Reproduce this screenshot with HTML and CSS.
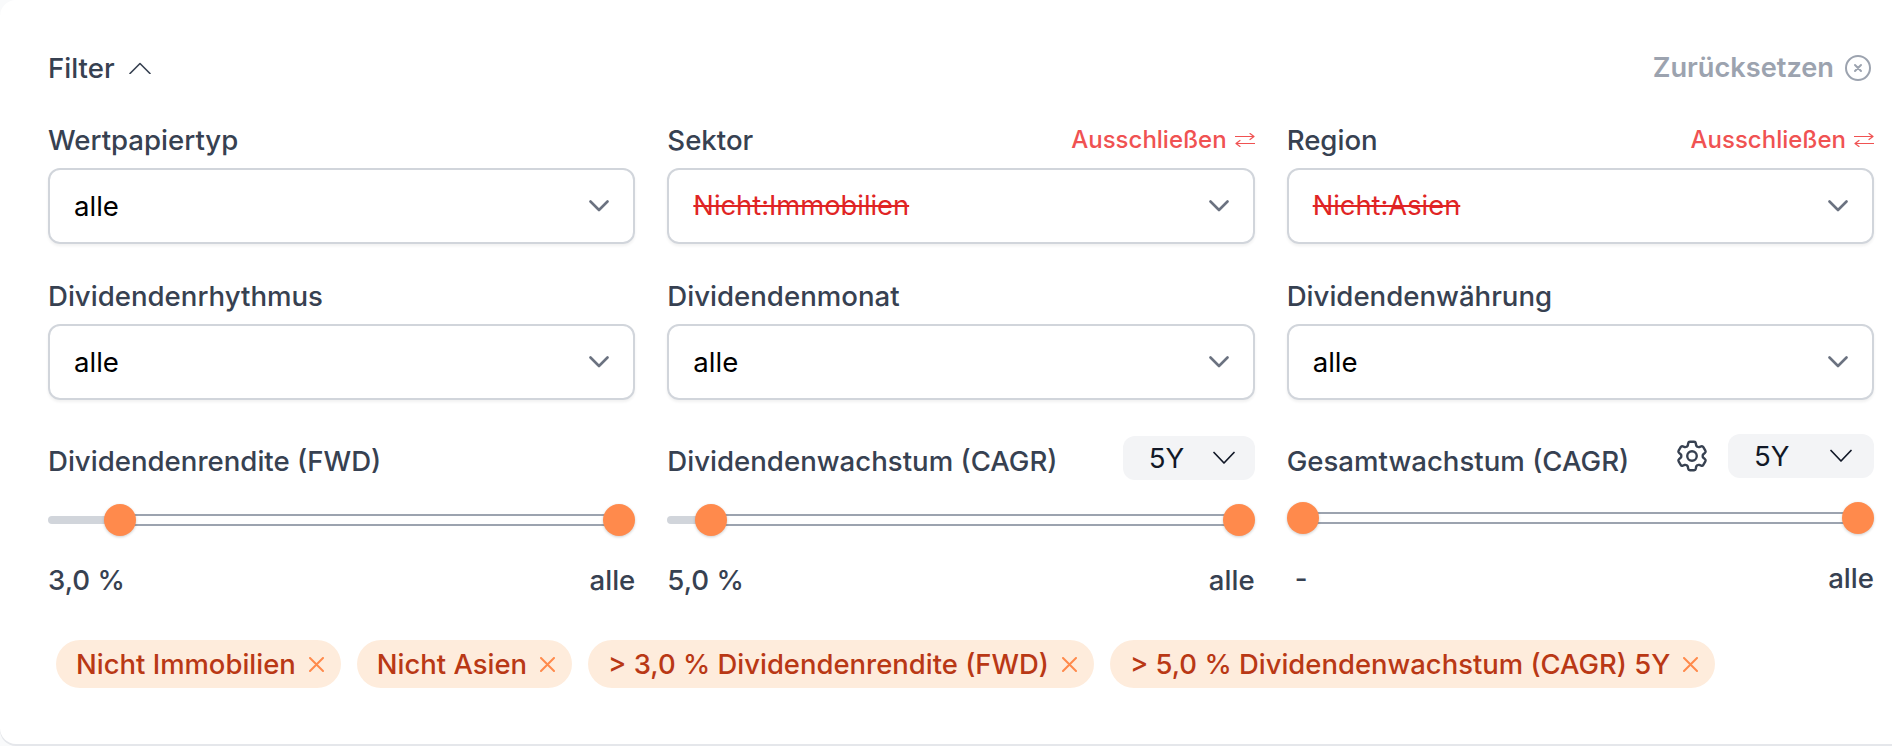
FILE: index.html
```html
<!DOCTYPE html>
<html lang="de">
<head>
    <meta charset="UTF-8">
    <title>Filter</title>
    <link rel="stylesheet" href="styles.css">
</head>
<body>
    <section class="card">
        <div class="card-head">
            <div class="toggle">
                <span>Filter</span>
                <svg class="toggle-icon" viewBox="0 0 22 12"><path d="M1 11.5L11 1.5L21 11.5"/></svg>
            </div>
            <div class="reset">
                <span>Zurücksetzen</span>
                <svg class="reset-icon" viewBox="0 0 26 26"><circle cx="13" cy="13" r="12"/><path d="M10 10l6 6M16 10l-6 6"/></svg>
            </div>
        </div>

        <div class="field-grid">
            <div class="field">
                <div class="field-label"><label>Wertpapiertyp</label></div>
                <div class="select"><span>alle</span><svg class="select-icon" viewBox="0 0 20 12"><path d="M1.5 1.5L10 10L18.5 1.5"/></svg></div>
            </div>
            <div class="field">
                <div class="field-label">
                    <label>Sektor</label>
                    <span class="exclude">Ausschließen <svg viewBox="0 0 20 14"><path d="M0 3.5h19M15 .5l4 3-4 3M20 10.5H1M5 7.5l-4 3 4 3"/></svg></span>
                </div>
                <div class="select"><span class="negated">Nicht:Immobilien</span><svg class="select-icon" viewBox="0 0 20 12"><path d="M1.5 1.5L10 10L18.5 1.5"/></svg></div>
            </div>
            <div class="field">
                <div class="field-label">
                    <label>Region</label>
                    <span class="exclude">Ausschließen <svg viewBox="0 0 20 14"><path d="M0 3.5h19M15 .5l4 3-4 3M20 10.5H1M5 7.5l-4 3 4 3"/></svg></span>
                </div>
                <div class="select"><span class="negated">Nicht:Asien</span><svg class="select-icon" viewBox="0 0 20 12"><path d="M1.5 1.5L10 10L18.5 1.5"/></svg></div>
            </div>

            <div class="field">
                <div class="field-label"><label>Dividendenrhythmus</label></div>
                <div class="select"><span>alle</span><svg class="select-icon" viewBox="0 0 20 12"><path d="M1.5 1.5L10 10L18.5 1.5"/></svg></div>
            </div>
            <div class="field">
                <div class="field-label"><label>Dividendenmonat</label></div>
                <div class="select"><span>alle</span><svg class="select-icon" viewBox="0 0 20 12"><path d="M1.5 1.5L10 10L18.5 1.5"/></svg></div>
            </div>
            <div class="field">
                <div class="field-label"><label>Dividendenwährung</label></div>
                <div class="select"><span>alle</span><svg class="select-icon" viewBox="0 0 20 12"><path d="M1.5 1.5L10 10L18.5 1.5"/></svg></div>
            </div>
        </div>

        <div class="range-grid">
            <div class="range">
                <div class="range-head"><label>Dividendenrendite (FWD)</label></div>
                <div class="slider">
                    <div class="slider-rest slider-rest-yield"></div>
                    <div class="slider-handle"></div>
                    <div class="slider-active"></div>
                    <div class="slider-handle"></div>
                </div>
                <div class="range-values"><span>3,0 %</span><span>alle</span></div>
            </div>
            <div class="range">
                <div class="range-head">
                    <label>Dividendenwachstum (CAGR)</label>
                    <div class="period"><span>5Y</span><svg class="period-icon" viewBox="0 0 22 14"><path d="M1 1.5L11 12L21 1.5"/></svg></div>
                </div>
                <div class="slider">
                    <div class="slider-rest slider-rest-growth"></div>
                    <div class="slider-handle"></div>
                    <div class="slider-active"></div>
                    <div class="slider-handle"></div>
                </div>
                <div class="range-values"><span>5,0 %</span><span>alle</span></div>
            </div>
            <div class="range range-total">
                <div class="range-head">
                    <label>Gesamtwachstum (CAGR)</label>
                    <svg class="gear" viewBox="0 0 24 24"><path d="M9.594 3.94c.09-.542.56-.94 1.11-.94h2.593c.55 0 1.02.398 1.11.94l.213 1.281c.063.374.313.686.645.87.074.04.147.083.22.127.324.196.72.257 1.075.124l1.217-.456a1.125 1.125 0 011.37.49l1.296 2.247a1.125 1.125 0 01-.26 1.431l-1.003.827c-.293.24-.438.613-.431.992a6.759 6.759 0 010 .255c-.007.378.138.75.43.99l1.005.828c.424.35.534.954.26 1.43l-1.298 2.247a1.125 1.125 0 01-1.369.491l-1.217-.456c-.355-.133-.75-.072-1.076.124a6.57 6.57 0 01-.22.128c-.331.183-.581.495-.644.869l-.213 1.28c-.09.543-.56.941-1.11.941h-2.594c-.55 0-1.02-.398-1.11-.94l-.213-1.281c-.062-.374-.312-.686-.644-.87a6.52 6.52 0 01-.22-.127c-.325-.196-.72-.257-1.076-.124l-1.217.456a1.125 1.125 0 01-1.369-.49l-1.297-2.247a1.125 1.125 0 01.26-1.431l1.004-.827c.292-.24.437-.613.43-.992a6.932 6.932 0 010-.255c.007-.378-.138-.75-.43-.99l-1.004-.828a1.125 1.125 0 01-.26-1.43l1.297-2.247a1.125 1.125 0 011.37-.491l1.216.456c.356.133.751.072 1.076-.124.072-.044.146-.087.22-.128.332-.183.582-.495.644-.869l.214-1.281z"/><path d="M15 12a3 3 0 11-6 0 3 3 0 016 0z"/></svg>
                    <div class="period period-wide"><span>5Y</span><svg class="period-icon" viewBox="0 0 22 14"><path d="M1 1.5L11 12L21 1.5"/></svg></div>
                </div>
                <div class="slider">
                    <div class="slider-handle"></div>
                    <div class="slider-active"></div>
                    <div class="slider-handle"></div>
                </div>
                <div class="range-values"><span class="range-empty">-</span><span>alle</span></div>
            </div>
        </div>

        <div class="chips">
            <span class="chip">Nicht Immobilien <svg viewBox="0 0 15 15"><path d="M1 1l13 13M14 1L1 14"/></svg></span>
            <span class="chip">Nicht Asien <svg viewBox="0 0 15 15"><path d="M1 1l13 13M14 1L1 14"/></svg></span>
            <span class="chip">&gt; 3,0 % Dividendenrendite (FWD) <svg viewBox="0 0 15 15"><path d="M1 1l13 13M14 1L1 14"/></svg></span>
            <span class="chip">&gt; 5,0 % Dividendenwachstum (CAGR) 5Y <svg viewBox="0 0 15 15"><path d="M1 1l13 13M14 1L1 14"/></svg></span>
        </div>
    </section>
</body>
</html>
```

FILE: styles.css
```css
* {
    box-sizing: border-box;
}
html, body {
    height: 100%;
}
body {
    margin: 0;
    background: #f9fafb;
    font-family: Inter, "Liberation Sans", sans-serif;
    font-size: 27.6px;
    line-height: 30px;
    color: #374151;
    overflow: hidden;
}
svg {
    display: block;
    fill: none;
    stroke-linecap: round;
    stroke-linejoin: round;
}
label {
    font-weight: 500;
}

.card {
    height: 744px;
    padding: 50px 18px 0 48px;
    background: #fff;
    border-radius: 16px 0 0 16px;
    box-shadow: 0 2px 0 #e5e7eb;
}
.card-head {
    display: flex;
    justify-content: space-between;
    align-items: center;
    height: 36px;
}
.toggle {
    display: flex;
    align-items: center;
    gap: 14px;
    font-weight: 500;
}
.toggle-icon {
    width: 22px;
    height: 12px;
    stroke: #374151;
    stroke-width: 1.6;
}
.reset {
    display: flex;
    align-items: center;
    gap: 11px;
    padding-right: 3px;
    color: #9ca3af;
    font-size: 27.2px;
    font-weight: 600;
}
.reset-icon {
    width: 26px;
    height: 26px;
    stroke: #9ca3af;
    stroke-width: 2;
}

.field-grid {
    display: grid;
    grid-template-columns: repeat(3, 1fr);
    column-gap: 32px;
    row-gap: 34px;
    margin-top: 36px;
}
.field-label {
    display: flex;
    justify-content: space-between;
    align-items: center;
    height: 36px;
    margin-bottom: 10px;
}
.exclude {
    display: flex;
    align-items: center;
    gap: 8px;
    color: #f05252;
    font-size: 24px;
    font-weight: 500;
}
.exclude svg {
    width: 20px;
    height: 14px;
    stroke: #f05252;
    stroke-width: 1.2;
}
.select {
    display: flex;
    justify-content: space-between;
    align-items: center;
    height: 76px;
    padding: 0 24px;
    border: 2px solid #d1d5db;
    border-radius: 12px;
    box-shadow: 0 2px 3px rgba(0, 0, 0, 0.06);
    color: #000;
}
.negated {
    color: #e02424;
    font-size: 27.3px;
    text-decoration: line-through;
    text-decoration-thickness: 2px;
}
.select-icon {
    width: 20px;
    height: 12px;
    stroke: #6b7280;
    stroke-width: 2.6;
}

.range-grid {
    display: grid;
    grid-template-columns: repeat(3, 1fr);
    column-gap: 32px;
    margin-top: 36px;
}
.range-total {
    margin-top: -2px;
}
.range-head {
    display: flex;
    align-items: center;
    height: 44px;
}
.range-head label {
    flex: 1;
    margin-top: 5px;
}
.range-total .range-head label {
    margin-top: 10px;
}
.period {
    display: flex;
    justify-content: space-between;
    align-items: center;
    width: 132px;
    height: 44px;
    padding: 0 20px 0 26px;
    background: #f3f4f6;
    border-radius: 12px;
    color: #111827;
}
.period-wide {
    width: 146px;
    padding-right: 22px;
}
.period-icon {
    width: 22px;
    height: 14px;
    stroke: #111827;
    stroke-width: 1.7;
}
.gear {
    width: 38px;
    height: 38px;
    margin-right: 17px;
    stroke: #374151;
    stroke-width: 1.5;
}
.slider {
    display: flex;
    align-items: center;
    height: 32px;
    margin-top: 24px;
}
.slider-rest {
    height: 8px;
    margin-right: -4px;
    background: #d1d5db;
    border-radius: 4px 0 0 4px;
}
.slider-rest-yield {
    width: 60px;
}
.slider-rest-growth {
    width: 32px;
}
.slider-active {
    flex: 1;
    height: 12px;
    margin: 0 -2px;
    border-top: 2px solid #9ca3af;
    border-bottom: 2px solid #9ca3af;
}
.slider-handle {
    position: relative;
    z-index: 1;
    width: 32px;
    height: 32px;
    border-radius: 50%;
    background: #ff8a4c;
    box-shadow: 0 1px 3px rgba(0, 0, 0, 0.2);
}
.range-values {
    display: flex;
    justify-content: space-between;
    margin-top: 29px;
    font-weight: 500;
}
.range-empty {
    padding-left: 8px;
}

.chips {
    display: flex;
    gap: 16px;
    margin-top: 45px;
    padding-left: 8px;
}
.chip {
    display: flex;
    align-items: center;
    gap: 13px;
    height: 48px;
    padding: 0 17px 0 20px;
    background: #feecdc;
    border-radius: 24px;
    color: #b93815;
    font-size: 27.45px;
    font-weight: 500;
}
.chip svg {
    width: 15px;
    height: 15px;
    stroke: #ff8a4c;
    stroke-width: 2;
}
```
